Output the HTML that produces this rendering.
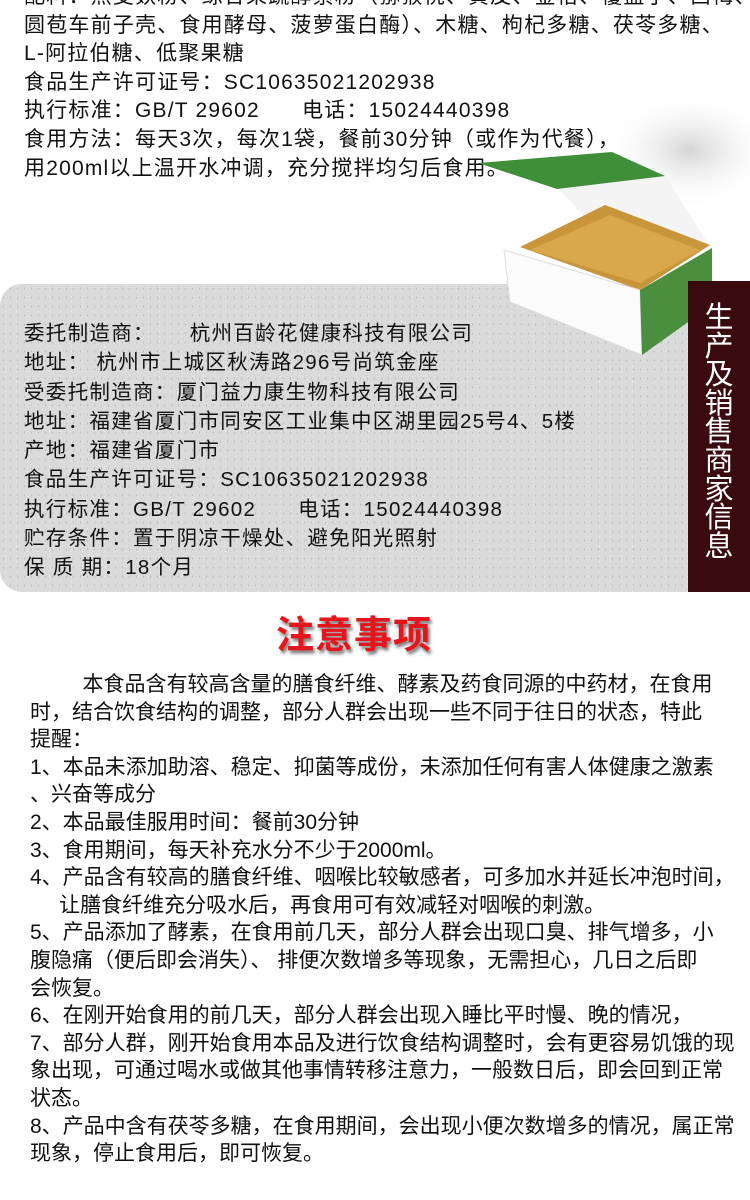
<!DOCTYPE html>
<html><head><meta charset="utf-8"><style>
*{margin:0;padding:0}
body{width:750px;height:1200px;background:#fff;position:relative;overflow:hidden;font-family:"Liberation Sans","Noto Sans CJK SC",sans-serif;color:#111}
.blk{position:absolute;white-space:nowrap;font-size:21px}
#top{left:24px;top:-17px;line-height:28.6px;letter-spacing:1.2px}
#gray{position:absolute;left:0;top:284px;width:690px;height:308px;background:#dadada;border-radius:22px 0 0 22px;
background-image:radial-gradient(#bbb 0.6px,transparent 0.8px),radial-gradient(#eee 0.6px,transparent 0.8px);background-size:7px 9px,11px 5px}
#mid{left:24px;top:319px;line-height:29.3px;font-size:20.5px;letter-spacing:1.3px}
#bar{position:absolute;left:688px;top:281px;width:62px;height:311px;background:#3a0b0e;color:#fff;font-size:29px;line-height:28.6px;text-align:center;padding-top:23px;box-sizing:border-box}
#title{position:absolute;left:0;width:708px;top:604px;text-align:center;font-size:38px;font-weight:bold;color:#e8141c;text-shadow:2px 3px 3px #777;letter-spacing:1px}
#bot{left:30px;top:671px;line-height:27.6px}
</style></head><body>
<div class="blk" id="top">
<div>配料：燕麦麸粉、综合果蔬酵素粉（猕猴桃、黄皮、金桔、覆盆子、西梅、</div>
<div>圆苞车前子壳、食用酵母、菠萝蛋白酶）、木糖、枸杞多糖、茯苓多糖、</div>
<div>L-阿拉伯糖、低聚果糖</div>
<div>食品生产许可证号：SC10635021202938</div>
<div>执行标准：GB/T 29602&nbsp;&nbsp;&nbsp;&nbsp;&nbsp;&nbsp;电话：15024440398</div>
<div>食用方法：每天3次，每次1袋，餐前30分钟（或作为代餐），</div>
<div>用200ml以上温开水冲调，充分搅拌均匀后食用。</div>
</div>
<div id="gray"></div>
<svg style="position:absolute;left:440px;top:90px" width="310" height="290" viewBox="440 90 310 290">
<defs><radialGradient id="sh"><stop offset="0" stop-color="#d4d4d4"/><stop offset="1" stop-color="#fff" stop-opacity="0"/></radialGradient></defs>
<ellipse cx="690" cy="150" rx="90" ry="60" fill="url(#sh)"/>
<polygon points="557,188 665,176 712,250 590,222" fill="#f4f4f4"/>
<polygon points="478,163 612,152 665,176 557,189" fill="#3f8f3a"/>
<polygon points="520,247 605,205 710,245 640,290" fill="#c8953a"/>
<polygon points="530,250 610,215 700,250 640,283" fill="#d9a84a"/>
<polygon points="504,250 640,290 642,355 510,302" fill="#fbfbfb" stroke="#ddd"/>
<polygon points="640,290 712,248 712,305 642,355" fill="#4a8f3e"/>
</svg>
<div class="blk" id="mid">
<div>委托制造商：&nbsp;&nbsp;&nbsp;&nbsp;&nbsp;杭州百龄花健康科技有限公司</div>
<div>地址：&nbsp;杭州市上城区秋涛路296号尚筑金座</div>
<div>受委托制造商：厦门益力康生物科技有限公司</div>
<div>地址：福建省厦门市同安区工业集中区湖里园25号4、5楼</div>
<div>产地：福建省厦门市</div>
<div>食品生产许可证号：SC10635021202938</div>
<div>执行标准：GB/T 29602&nbsp;&nbsp;&nbsp;&nbsp;&nbsp;&nbsp;电话：15024440398</div>
<div>贮存条件：置于阴凉干燥处、避免阳光照射</div>
<div>保 质 期：18个月</div>
</div>
<div id="bar">生<br>产<br>及<br>销<br>售<br>商<br>家<br>信<br>息</div>
<div id="title">注意事项</div>
<div class="blk" id="bot">
<div>&nbsp;&nbsp;&nbsp;&nbsp;&nbsp;&nbsp;&nbsp;&nbsp;&nbsp;本食品含有较高含量的膳食纤维、酵素及药食同源的中药材，在食用</div>
<div>时，结合饮食结构的调整，部分人群会出现一些不同于往日的状态，特此</div>
<div>提醒：</div>
<div>1、本品未添加助溶、稳定、抑菌等成份，未添加任何有害人体健康之激素</div>
<div>、兴奋等成分</div>
<div>2、本品最佳服用时间：餐前30分钟</div>
<div>3、食用期间，每天补充水分不少于2000ml。</div>
<div>4、产品含有较高的膳食纤维、咽喉比较敏感者，可多加水并延长冲泡时间，</div>
<div>&nbsp;&nbsp;&nbsp;&nbsp;&nbsp;让膳食纤维充分吸水后，再食用可有效减轻对咽喉的刺激。</div>
<div>5、产品添加了酵素，在食用前几天，部分人群会出现口臭、排气增多，小</div>
<div>腹隐痛（便后即会消失）、 排便次数增多等现象，无需担心，几日之后即</div>
<div>会恢复。</div>
<div>6、在刚开始食用的前几天，部分人群会出现入睡比平时慢、晚的情况，</div>
<div>7、部分人群，刚开始食用本品及进行饮食结构调整时，会有更容易饥饿的现</div>
<div>象出现，可通过喝水或做其他事情转移注意力，一般数日后，即会回到正常</div>
<div>状态。</div>
<div>8、产品中含有茯苓多糖，在食用期间，会出现小便次数增多的情况，属正常</div>
<div>现象，停止食用后，即可恢复。</div>
</div>
</body></html>
